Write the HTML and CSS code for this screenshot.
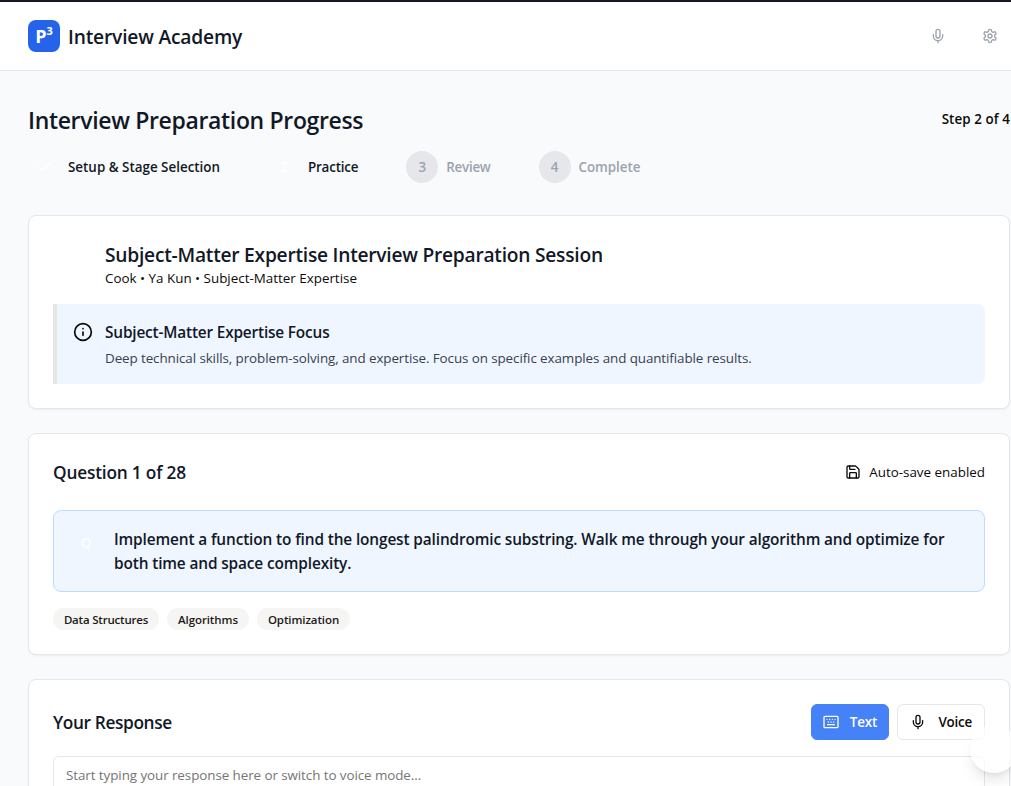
FILE: index.html
```html
<!DOCTYPE html>
<html lang="en">
<head>
<meta charset="utf-8">
<title>Interview Academy</title>
<link rel="stylesheet" href="styles.css">
</head>
<body>
<svg class="sprite" aria-hidden="true">
  <symbol id="mic" viewBox="0 0 24 24"><path d="M12 2a3 3 0 0 0-3 3v7a3 3 0 0 0 6 0V5a3 3 0 0 0-3-3Z"/><path d="M19 10v2a7 7 0 0 1-14 0v-2M12 19v3"/></symbol>
  <symbol id="cog" viewBox="0 0 24 24"><path d="M12.22 2h-.44a2 2 0 0 0-2 2v.18a2 2 0 0 1-1 1.73l-.43.25a2 2 0 0 1-2 0l-.15-.08a2 2 0 0 0-2.73.73l-.22.38a2 2 0 0 0 .73 2.73l.15.1a2 2 0 0 1 1 1.72v.51a2 2 0 0 1-1 1.74l-.15.09a2 2 0 0 0-.73 2.73l.22.38a2 2 0 0 0 2.73.73l.15-.08a2 2 0 0 1 2 0l.43.25a2 2 0 0 1 1 1.73V20a2 2 0 0 0 2 2h.44a2 2 0 0 0 2-2v-.18a2 2 0 0 1 1-1.73l.43-.25a2 2 0 0 1 2 0l.15.08a2 2 0 0 0 2.73-.73l.22-.39a2 2 0 0 0-.73-2.73l-.15-.08a2 2 0 0 1-1-1.74v-.5a2 2 0 0 1 1-1.74l.15-.09a2 2 0 0 0 .73-2.73l-.22-.38a2 2 0 0 0-2.73-.73l-.15.08a2 2 0 0 1-2 0l-.43-.25a2 2 0 0 1-1-1.73V4a2 2 0 0 0-2-2z"/><circle cx="12" cy="12" r="3"/></symbol>
  <symbol id="check" viewBox="0 0 24 24"><path d="M20 6 9 17l-5-5"/></symbol>
  <symbol id="info" viewBox="0 0 24 24"><circle cx="12" cy="12" r="10"/><path d="M12 16v-4M12 8h.01"/></symbol>
  <symbol id="save" viewBox="0 0 24 24"><path d="M15.2 3a2 2 0 0 1 1.4.6l3.8 3.8a2 2 0 0 1 .6 1.4V19a2 2 0 0 1-2 2H5a2 2 0 0 1-2-2V5a2 2 0 0 1 2-2z"/><path d="M17 21v-7a1 1 0 0 0-1-1H8a1 1 0 0 0-1 1v7M7 3v4a1 1 0 0 0 1 1h7"/></symbol>
  <symbol id="keyboard" viewBox="0 0 24 24"><rect x="1.5" y="3.5" width="21" height="17" rx="1.5"/><path d="M6 8h.01M10 8h.01M14 8h.01M18 8h.01M8 12h.01M12 12h.01M16 12h.01M7 16h10"/></symbol>
</svg>
<header class="topbar">
  <div class="brand">
    <div class="logo">P<sup>3</sup></div>
    <span class="brand-name">Interview Academy</span>
  </div>
  <nav class="tools">
    <svg class="icon"><use href="#mic"/></svg>
    <svg class="icon"><use href="#cog"/></svg>
  </nav>
</header>
<main class="page">
  <section class="progress">
    <div class="row">
      <h1 class="progress-title">Interview Preparation Progress</h1>
      <span class="step-count">Step 2 of 4</span>
    </div>
    <ol class="steps">
      <li class="step setup"><span class="dot"><svg class="icon"><use href="#check"/></svg></span><span class="label">Setup &amp; Stage Selection</span></li>
      <li class="step practice"><span class="dot">2</span><span class="label">Practice</span></li>
      <li class="step review pending"><span class="dot">3</span><span class="label">Review</span></li>
      <li class="step complete pending"><span class="dot">4</span><span class="label">Complete</span></li>
    </ol>
  </section>

  <section class="card session">
    <div class="session-head">
      <h2 class="session-title">Subject-Matter Expertise Interview Preparation Session</h2>
      <p class="session-meta">Cook • Ya Kun • Subject-Matter Expertise</p>
    </div>
    <div class="focus">
      <svg class="icon info"><use href="#info"/></svg>
      <div>
        <h3 class="focus-title">Subject-Matter Expertise Focus</h3>
        <p class="focus-text">Deep technical skills, problem-solving, and expertise. Focus on specific examples and quantifiable results.</p>
      </div>
    </div>
  </section>

  <section class="card question">
    <div class="row question-head">
      <h2 class="question-count">Question 1 of 28</h2>
      <div class="autosave"><svg class="icon"><use href="#save"/></svg><span>Auto-save enabled</span></div>
    </div>
    <div class="prompt">
      <span class="badge">Q</span>
      <p class="prompt-text">Implement a function to find the longest palindromic substring. Walk me through your algorithm and optimize for<br>both time and space complexity.</p>
    </div>
    <div class="tags">
      <span class="tag structures">Data Structures</span>
      <span class="tag algorithms">Algorithms</span>
      <span class="tag optimization">Optimization</span>
    </div>
  </section>

  <section class="card response">
    <div class="row response-head">
      <h2 class="response-title">Your Response</h2>
      <div class="modes">
        <button class="mode text-mode"><svg class="icon"><use href="#keyboard"/></svg><span>Text</span></button>
        <button class="mode voice-mode"><svg class="icon"><use href="#mic"/></svg><span>Voice</span></button>
      </div>
    </div>
    <div class="answer">Start typing your response here or switch to voice mode...</div>
  </section>
</main>
<div class="floating"></div>
</body>
</html>
```
FILE: styles.css
```css
* { box-sizing: border-box; }
html, body { height: 100%; }
body {
  margin: 0;
  overflow: hidden;
  background: #f9fafb;
  color: #0c0a09;
  font-family: "Open Sans", "Noto Sans", sans-serif;
  font-size: 13.4px;
  line-height: 20px;
  border-top: 2px solid #171822;
}
h1, h2, h3, p, ol { margin: 0; padding: 0; }
h1, h2, h3 { color: #111827; font-weight: 600; white-space: nowrap; }
p, span { white-space: nowrap; }
.sprite { display: none; }
.icon {
  width: 16px;
  height: 16px;
  flex: none;
  fill: none;
  stroke: currentColor;
  stroke-width: 2;
  stroke-linecap: round;
  stroke-linejoin: round;
}
.row { display: flex; align-items: center; justify-content: space-between; }

.topbar {
  display: flex;
  align-items: center;
  justify-content: space-between;
  height: 69px;
  padding: 0 13px 0 28px;
  background: #fff;
  border-bottom: 1px solid #e5e7eb;
}
.brand { display: flex; align-items: center; gap: 8px; }
.logo {
  display: flex;
  justify-content: center;
  width: 32px;
  height: 32px;
  border-radius: 8px;
  background: #2563eb;
  color: #fff;
  font-size: 18px;
  font-weight: 700;
  line-height: 33px;
}
.logo sup { font-size: 11px; line-height: 21px; vertical-align: top; }
.brand-name { padding-top: 2px; color: #111827; font-size: 19.2px; font-weight: 600; letter-spacing: -.18px; line-height: 28px; }
.tools { display: flex; gap: 36px; color: #9ca3af; }

.page { width: 1010px; padding: 32px 0 0 28px; }
.progress { margin-bottom: 32px; }
.progress-title { height: 32px; padding-top: 1px; font-size: 23px; letter-spacing: -.34px; line-height: 32px; }
.step-count { font-weight: 600; letter-spacing: .08px; }
.steps { display: flex; list-style: none; gap: 48px; margin-top: 16px; }
.step { display: flex; align-items: center; gap: 8px; font-weight: 600; color: #111827; }
.practice .label { letter-spacing: -.2px; }
.review .label { letter-spacing: -.25px; }
.complete .label { letter-spacing: -.05px; }
.dot {
  display: flex;
  align-items: center;
  justify-content: center;
  width: 32px;
  height: 32px;
  border-radius: 50%;
  color: #fff;
}
.pending { color: #9ca3af; }
.pending .dot { background: #e5e7eb; color: #9ca3af; }

.card {
  padding: 24px;
  margin-bottom: 24px;
  background: #fff;
  border: 1px solid #e5e7eb;
  border-radius: 8px;
  box-shadow: 0 1px 2px rgba(0, 0, 0, .05);
}
.session { height: 194px; }
.session-head { padding: 2px 0 0 52px; margin-bottom: 16px; }
.session-title { font-size: 19.2px; letter-spacing: -.24px; line-height: 26px; }
.focus {
  display: flex;
  gap: 12px;
  height: 80px;
  padding: 16px;
  background: #eff6ff;
  border-left: 4px solid #e7e5e4;
  border-radius: 0 8px 8px 0;
}
.info { width: 20px; height: 20px; margin-top: 2px; }
.focus-title { padding-top: 1px; font-size: 15.4px; letter-spacing: -.18px; line-height: 24px; margin-bottom: 3px; }
.focus-text { color: #374151; letter-spacing: -.085px; }

.question { height: 222px; }
.question-head { height: 28px; margin-bottom: 24px; }
.question-count, .response-title { padding-top: 2px; font-size: 17.3px; line-height: 28px; }
.question-count { letter-spacing: -.2px; }
.response-title { letter-spacing: -.38px; }
.autosave { display: flex; align-items: center; gap: 8px; }
.prompt {
  display: flex;
  gap: 12px;
  height: 82px;
  padding: 16px;
  background: #eff6ff;
  border: 1px solid #bfdbfe;
  border-radius: 8px;
}
.badge { width: 32px; line-height: 32px; color: #fff; font-weight: 600; text-align: center; }
.prompt-text { padding-top: 1px; color: #111827; font-size: 15.4px; font-weight: 600; letter-spacing: -.13px; line-height: 24px; }
.tags { display: flex; gap: 8px; margin-top: 16px; }
.tag {
  height: 22px;
  border-radius: 11px;
  background: #f5f5f4;
  color: #1c1917;
  font-size: 11.5px;
  font-weight: 600;
  letter-spacing: -.1px;
  line-height: 24px;
  text-align: center;
}
.structures { width: 106px; letter-spacing: -.2px; }
.algorithms { width: 82px; }
.optimization { width: 93px; }

.response { height: 240px; }
.response-head { height: 36px; margin-bottom: 16px; }
.modes { display: flex; gap: 8px; }
.mode {
  display: flex;
  align-items: center;
  justify-content: space-between;
  height: 36px;
  padding: 0 12px;
  border: 1px solid #e5e7eb;
  border-radius: 6px;
  background: #fff;
  color: #0c0a09;
  font: 600 13.4px/20px "Open Sans", "Noto Sans", sans-serif;
  letter-spacing: -.2px;
}
.text-mode { width: 78px; background: #4582f7; border-color: #4582f7; color: #fff; padding: 0 11px; }
.voice-mode { width: 88px; }
.answer {
  height: 150px;
  padding: 8px 12px;
  border: 1px solid #e5e7eb;
  border-radius: 6px;
  color: #757575;
  letter-spacing: -.07px;
}
.floating {
  position: absolute;
  left: 970px;
  top: 725px;
  width: 48px;
  height: 48px;
  border-radius: 50%;
  background: rgba(255, 255, 255, .75);
  box-shadow: 0 10px 15px -3px rgba(0, 0, 0, .1), 0 4px 6px -4px rgba(0, 0, 0, .1);
}
```
